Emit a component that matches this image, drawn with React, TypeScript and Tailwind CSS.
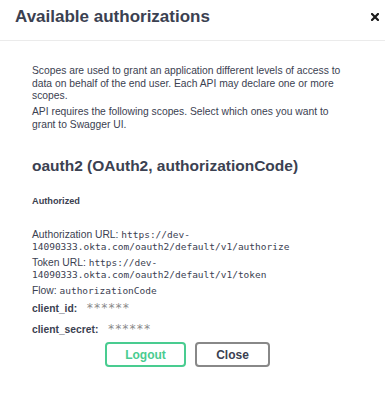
import React from "react";

const sans = { fontFamily: '"Liberation Sans", Arial, sans-serif' };
const mono = { fontFamily: '"DejaVu Sans Mono", monospace' };

function Code({ children }: { children: React.ReactNode }) {
  return (
    <code className="text-[9.5px] leading-[12px]" style={mono}>
      {children}
    </code>
  );
}

export default function App() {
  return (
    <div
      className="w-[385px] h-[400px] bg-white text-[#3b4151] flex flex-col"
      style={sans}
    >
      {/* header */}
      <div className="h-[41px] border-b border-[#ebebeb] flex items-start justify-between pl-[15px] pr-[6px]">
        <h3 className="mt-[7px] text-[17px] leading-[20px] font-bold text-[#3b4151]">
          Available authorizations
        </h3>
        <button className="mt-[13px] w-[8px] h-[8px] flex">
          <svg width="8" height="8" viewBox="0 0 8 8">
            <path d="M1 1 L7 7 M7 1 L1 7" stroke="#1a1a1a" strokeWidth="2.2" strokeLinecap="square" />
          </svg>
        </button>
      </div>

      {/* content */}
      <div className="flex flex-col pl-[32px] w-[352px]">
        <div className="mt-[24px] text-[10.3px] leading-[12.5px] text-[#3b4151] flex flex-col gap-[3.5px]">
          <p>
            Scopes are used to grant an application different levels of access to data on behalf of the end user. Each API may declare one or more scopes.
          </p>
          <p>API requires the following scopes. Select which ones you want to grant to Swagger UI.</p>
        </div>

        <h4 className="mt-[26px] text-[15.5px] leading-[18px] font-bold">
          oauth2 (OAuth2, authorizationCode)
        </h4>

        <h6 className="mt-[21px] text-[9.2px] leading-[11px] font-bold">Authorized</h6>

        <div className="mt-[22px] flex flex-col gap-[4px] text-[10.3px] leading-[12px]">
          <div className="flex flex-col">
            <p>
              Authorization URL: <Code>https://dev-</Code>
            </p>
            <p>
              <Code>14090333.okta.com/oauth2/default/v1/authorize</Code>
            </p>
          </div>
          <div className="flex flex-col">
            <p>
              Token URL: <Code>https://dev-</Code>
            </p>
            <p>
              <Code>14090333.okta.com/oauth2/default/v1/token</Code>
            </p>
          </div>
          <p>
            Flow: <Code>authorizationCode</Code>
          </p>
        </div>

        <div className="mt-[5px] flex flex-col gap-[8px] text-[10.3px] leading-[12px]">
          <div className="flex items-baseline">
            <span className="font-bold">client_id:</span>
            <code className="ml-[9px] text-[12px] leading-[12px] text-[#8a8a8a]" style={mono}>
              ******
            </code>
          </div>
          <div className="flex items-baseline">
            <span className="font-bold">client_secret:</span>
            <code className="ml-[9px] text-[12px] leading-[12px] text-[#8a8a8a]" style={mono}>
              ******
            </code>
          </div>
        </div>
      </div>

      {/* buttons */}
      <div className="mt-[6px] flex pl-[105px] gap-[9px]">
        <button className="w-[81px] h-[25px] border-2 border-[#49cc90] rounded-[4px] text-[12px] font-bold text-[#49cc90] flex items-center justify-center">
          Logout
        </button>
        <button className="w-[75px] h-[25px] border-2 border-[#888888] rounded-[4px] text-[12px] font-bold text-[#3b4151] flex items-center justify-center">
          Close
        </button>
      </div>
    </div>
  );
}
